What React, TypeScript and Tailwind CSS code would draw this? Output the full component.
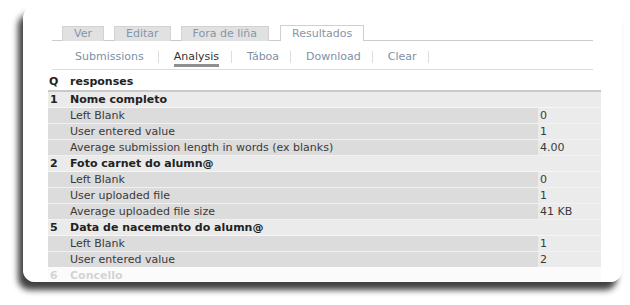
import React from 'react';

type Row = { q?: string; label: string; value?: string; head?: boolean };

const ROWS: Row[] = [
  { q: '1', label: 'Nome completo', head: true },
  { label: 'Left Blank', value: '0' },
  { label: 'User entered value', value: '1' },
  { label: 'Average submission length in words (ex blanks)', value: '4.00' },
  { q: '2', label: 'Foto carnet do alumn@', head: true },
  { label: 'Left Blank', value: '0' },
  { label: 'User uploaded file', value: '1' },
  { label: 'Average uploaded file size', value: '41 KB' },
  { q: '5', label: 'Data de nacemento do alumn@', head: true },
  { label: 'Left Blank', value: '1' },
  { label: 'User entered value', value: '2' },
  { q: '6', label: 'Concello', head: true },
];

const TABS = ['Ver', 'Editar', 'Fora de liña'];
const SUBTABS = ['Submissions', 'Analysis', 'Táboa', 'Download', 'Clear'];

function TableRow({ row }: { row: Row }) {
  if (row.head) {
    return (
      <div className="flex h-[16px] bg-[#ebebeb] border-b border-[#f6f6f6] font-bold text-[#222]">
        <span className="w-[22px] pl-[2px]">{row.q}</span>
        <span>{row.label}</span>
      </div>
    );
  }
  return (
    <div className="flex h-[16px] border-b border-[#f1f1f1] text-[#3a3a3a]">
      <div className="flex w-[490px] bg-[#dcdcdc]">
        <span className="w-[22px]" />
        <span>{row.label}</span>
      </div>
      <div className="flex-1 bg-[#ebebeb] pl-[2px]">{row.value}</div>
    </div>
  );
}

export default function App() {
  return (
    <div className="w-[630px] h-[305px] bg-white pt-[6px] pl-[23px] font-['DejaVu_Sans',Verdana,sans-serif] text-[11px] leading-[15px]">
      <div className="relative w-[599px] h-[276px] overflow-hidden rounded-[12px] bg-white shadow-[-5px_8px_6px_rgba(0,0,0,0.75)]">
        <div className="mx-[29px] mt-[19px] flex items-end border-b border-[#cbcbcb] pl-[10px] gap-[10px]">
          {TABS.map((t) => (
            <span
              key={t}
              className="h-[15px] -mb-px px-[11px] bg-[#e1e1e1] border border-b-0 border-[#d2d2d2] text-[#8496ab] leading-[14px]"
            >
              {t}
            </span>
          ))}
          <span className="h-[16px] -mb-px ml-px px-[11px] bg-white border border-b-0 border-[#cfcfcf] text-[#8496ab] leading-[15px]">
            Resultados
          </span>
        </div>

        <div className="mx-[29px] h-[29px] flex items-start pt-[9px] pl-[9px] border-b border-[#dcdcdc]">
          {SUBTABS.map((t, i) => (
            <div key={t} className="flex items-start">
              <span
                className={
                  t === 'Analysis'
                    ? 'pl-[15px] pr-[12px] text-[#333]'
                    : i === 0
                      ? 'px-[14px] text-[#7d90a5]'
                      : 'pl-[15px] pr-[11px] text-[#7d90a5]'
                }
              >
                <span
                  className={
                    t === 'Analysis'
                      ? 'block leading-[14px] border-b-[3px] border-[#8f8f8f]'
                      : 'block leading-[14px]'
                  }
                >
                  {t}
                </span>
              </span>
              <span className="mt-[1px] h-[12px] w-px bg-[#dedede]" />
            </div>
          ))}
        </div>

        <div className="ml-[25px] mr-[21px] mt-[4px]">
          <div className="flex h-[18px] border-b-2 border-[#c9c9c9] font-bold text-[#222]">
            <span className="w-[22px] pl-[1px]">Q</span>
            <span>responses</span>
          </div>
          {ROWS.map((r, i) => (
            <TableRow key={i} row={r} />
          ))}
        </div>

        <div className="absolute left-0 right-0 bottom-0 h-[15px] bg-white/80" />
      </div>
    </div>
  );
}
